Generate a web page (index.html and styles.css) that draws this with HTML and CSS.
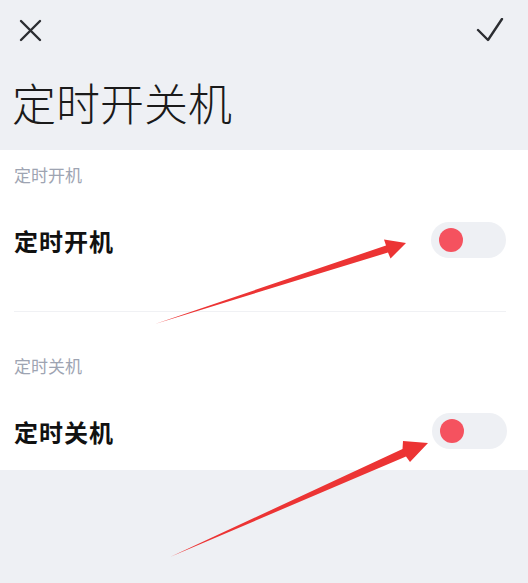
FILE: index.html
```html
<!DOCTYPE html>
<html lang="zh-CN">
<head>
  <title>定时开关机</title>
  <meta charset="utf-8">
  <meta name="viewport" content="width=device-width, initial-scale=1">
  <link rel="stylesheet" href="styles.css">
</head>
<body>
  <header class="topbar">
    <button class="topbar__btn" aria-label="关闭">
      <svg width="24" height="24" viewBox="0 0 24 24" aria-hidden="true">
        <path d="M3 3L22 22M22 3L3 22" stroke="currentColor" stroke-width="2.4" stroke-linecap="round" fill="none"></path>
      </svg>
    </button>
    <button class="topbar__btn" aria-label="确定">
      <svg width="28" height="24" viewBox="0 0 28 24" aria-hidden="true">
        <path d="M2 12L12 22L26 1" stroke="currentColor" stroke-width="2.4" stroke-linecap="round" stroke-linejoin="round" fill="none"></path>
      </svg>
    </button>
  </header>

  <h1 class="page-title">定时开关机</h1>

  <main class="panel">
    <section class="group group--first">
      <h2 class="group__label">定时开机</h2>
      <div class="row">
        <span class="row__text">定时开机</span>
        <button class="switch" role="switch" aria-checked="false"><span class="switch__knob"></span></button>
      </div>
    </section>

    <section class="group">
      <h2 class="group__label">定时关机</h2>
      <div class="row">
        <span class="row__text">定时关机</span>
        <button class="switch" role="switch" aria-checked="false"><span class="switch__knob"></span></button>
      </div>
    </section>
  </main>

  <!-- красные стрелки-пометки поверх страницы -->
  <svg class="marks" width="528" height="583" viewBox="0 0 528 583" aria-hidden="true">
    <polygon points="155,324 388,252.5 390.5,258.5 406,243 384,239.5 386,245.5" fill="#ec3434"></polygon>
    <polygon points="170,557 406,456.5 410,462 428,443 403,441 402.5,449" fill="#ec3434"></polygon>
  </svg>
</body>
</html>
```

FILE: styles.css
```css
*, *::before, *::after {
  margin: 0;
  padding: 0;
  box-sizing: border-box;
}

html {
  font-size: 16px;
}

body {
  position: relative;
  min-height: 100vh;
  background-color: #eef0f4;
  font-family: "Noto Sans CJK SC", "Noto Sans", sans-serif;
  color: #111111;
  overflow: hidden;
}

button {
  border: none;
  background: transparent;
  font-family: inherit;
  cursor: pointer;
}

.topbar {
  display: flex;
  justify-content: space-between;
  align-items: center;
  height: 60px;
  padding: 0 24px 0 18px;
}

.topbar__btn {
  display: flex;
  color: #2b2d31;
}

.page-title {
  height: 90px;
  padding: 15px 0 0 12px;
  font-size: 44px;
  font-weight: 300;
  line-height: 54px;
  color: #1a1a1a;
}

.panel {
  background: #ffffff;
  padding-bottom: 3px;
}

.group {
  padding: 42px 0 0;
  margin: 0 21px 0 14px;
}

.group--first {
  padding: 13px 0 35px;
  border-bottom: 1px solid #f0f1f4;
  margin-right: 22px;
}

.group__label {
  height: 24px;
  font-size: 17px;
  font-weight: 400;
  line-height: 24px;
  color: #9ea4b2;
}

.row {
  display: flex;
  justify-content: space-between;
  align-items: center;
  height: 72px;
  margin-top: 17px;
}

.row__text {
  font-size: 24px;
  font-weight: 700;
  letter-spacing: 1px;
}

.switch {
  display: flex;
  align-items: center;
  width: 75px;
  height: 36px;
  padding: 0 8px;
  border-radius: 18px;
  background: #eef0f4;
}

.switch__knob {
  width: 24px;
  height: 24px;
  border-radius: 50%;
  background: #f5525f;
}

.marks {
  position: absolute;
  top: 0;
  left: 0;
  pointer-events: none;
}
```
